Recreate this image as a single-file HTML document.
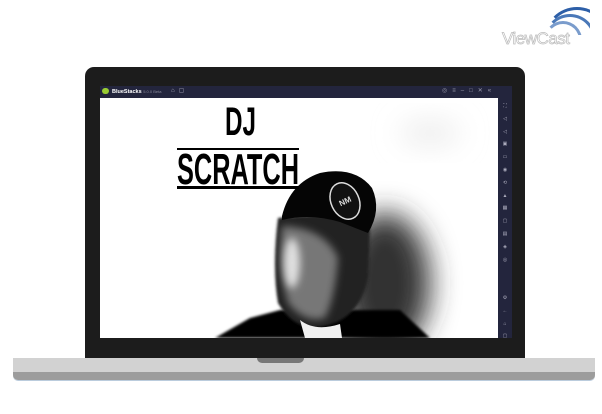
<html><head><style>
body{margin:0;width:602px;height:414px;background:#fff;position:relative;overflow:hidden;font-family:"Liberation Sans",sans-serif}
.a{position:absolute}
</style></head><body>
<div class="a" style="left:85px;top:67px;width:440px;height:292px;background:#1c1c1c;border-radius:9px 9px 0 0"></div>
<div class="a" style="left:100px;top:86px;width:412px;height:12px;background:#23253d"></div>
<div class="a" style="left:102px;top:88px;width:7px;height:6px;background:#9c3;border-radius:3px"></div>
<div class="a" style="left:112px;top:87px;font-size:5.5px;color:#fff;font-weight:bold;line-height:9px">BlueStacks <span style="color:#889;font-weight:normal;font-size:4px">5.0.0 Beta</span></div>
<div class="a" style="left:171px;top:87px;font-size:6px;color:#aab;letter-spacing:4px">⌂▢</div>
<div class="a" style="left:442px;top:87px;font-size:6px;color:#99a;letter-spacing:5px">◎≡–□✕«</div>
<div class="a" style="left:498px;top:98px;width:14px;height:240px;background:#23253d"></div>
<div class="a" style="left:502px;top:100px;width:6px;font-size:5px;color:#aab;line-height:12.8px;text-align:center">⛶<br>◁<br>◁<br>▣<br>▭<br>◉<br>⟲<br>▲<br>▦<br>▢<br>▤<br>◈<br>◎<br><br><br>⚙<br>←<br>⌂<br>▢</div>
<svg class="a" style="left:100px;top:98px" width="398" height="240" viewBox="0 0 398 240">
<defs>
<filter id="b1" x="-100%" y="-100%" width="300%" height="300%"><feGaussianBlur stdDeviation="14"/></filter>
<filter id="b2" x="-50%" y="-50%" width="200%" height="200%"><feGaussianBlur stdDeviation="4"/></filter>
<filter id="b3" x="-50%" y="-50%" width="200%" height="200%"><feGaussianBlur stdDeviation="1.2"/></filter>
</defs>
<rect width="398" height="240" fill="#fff"/>
<ellipse cx="330" cy="35" rx="30" ry="10" fill="#e8e8e8" filter="url(#b1)"/>
<ellipse cx="285" cy="185" rx="45" ry="70" fill="#333" filter="url(#b1)"/>
<path d="M115 240 L150 220 L180 212 L300 212 L330 240Z" fill="#000" filter="url(#b3)"/>
<path d="M178 120 Q172 170 178 205 Q195 235 225 228 Q260 220 268 180 L270 130 Q240 112 178 120Z" fill="#222" filter="url(#b3)"/>
<path d="M182 128 Q178 170 188 205 Q205 226 225 220 Q235 200 238 160 Q225 130 182 128Z" fill="#777" filter="url(#b2)"/>
<ellipse cx="192" cy="165" rx="8" ry="25" fill="#e0e0e0" filter="url(#b2)"/>
<path d="M200 222 Q215 234 240 226 L242 240 L205 240Z" fill="#f0f0f0"/>
<path d="M182 118 Q190 85 220 75 Q255 68 272 90 Q282 112 268 135 L240 124 Q210 115 182 122Z" fill="#050505"/>
<ellipse cx="245" cy="103" rx="14" ry="19" fill="#111" stroke="#ddd" stroke-width="1.5" transform="rotate(-25 245 103)"/>
<text x="245" y="106" font-size="8" fill="#ddd" text-anchor="middle" font-weight="bold" transform="rotate(-25 245 103)">NM</text>
<text x="125" y="37" font-family="Liberation Sans" font-weight="bold" font-size="40" fill="#000" textLength="31" lengthAdjust="spacingAndGlyphs">DJ</text>
<rect x="77" y="50" width="122" height="2" fill="#000"/>
<text x="77" y="86" font-family="Liberation Sans" font-weight="bold" font-size="44" fill="#000" textLength="122" lengthAdjust="spacingAndGlyphs">SCRATCH</text>
<rect x="77" y="88" width="122" height="3" fill="#000"/>
</svg>
<div class="a" style="left:13px;top:358px;width:582px;height:22px;background:#d2d2d2;border-radius:0 0 5px 5px;border-bottom:1px solid #bcd"></div>
<div class="a" style="left:13px;top:372px;width:582px;height:8px;background:#9c9c9c;border-radius:0 0 5px 5px"></div>
<div class="a" style="left:257px;top:358px;width:47px;height:5px;background:#777;border-radius:0 0 5px 5px"></div>
<div class="a" style="left:540px;top:5px;width:50px;height:30px;overflow:hidden">
 <div class="a" style="left:4px;top:2px;width:60px;height:60px;border:3px solid #2d5fa8;border-radius:50%;border-left-color:transparent;border-bottom-color:transparent"></div>
 <div class="a" style="left:4px;top:9px;width:46px;height:46px;border:3px solid #4a78b8;border-radius:50%;border-left-color:transparent;border-bottom-color:transparent"></div>
 <div class="a" style="left:4px;top:16px;width:32px;height:32px;border:3px solid #7a9ccc;border-radius:50%;border-left-color:transparent;border-bottom-color:transparent"></div>
</div>
<div class="a" style="left:502px;top:29px;font-size:17px;color:#fff;-webkit-text-stroke:0.7px #bbb;letter-spacing:-0.5px">ViewCast</div>
</body></html>
